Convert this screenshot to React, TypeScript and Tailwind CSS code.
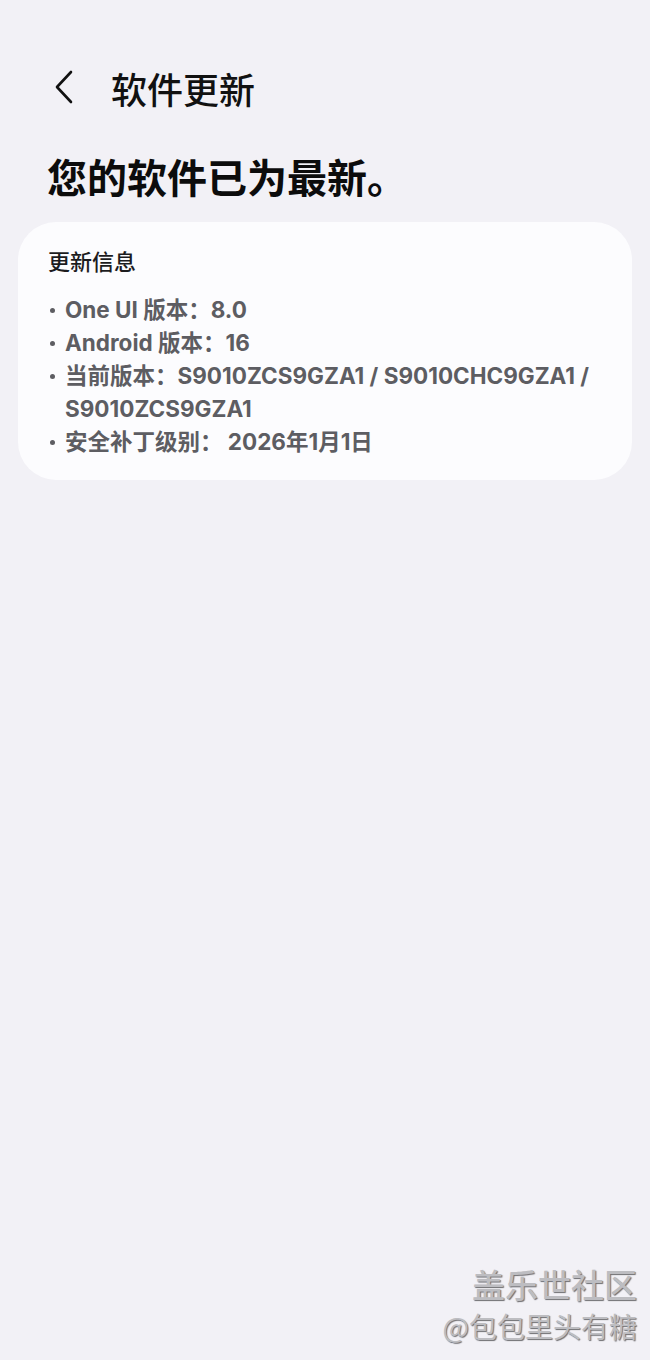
const INFO = [
  'One UI 版本：8.0',
  'Android 版本：16',
  '当前版本：S9010ZCS9GZA1 / S9010CHC9GZA1 / S9010ZCS9GZA1',
  '安全补丁级别： 2026年1月1日',
]

export default function App() {
  return (
    <div className="relative h-[1360px] w-full overflow-hidden bg-[#f2f1f6] font-['Noto_Sans_CJK_SC',sans-serif]">
      <div className="flex h-[106px] items-end gap-[35px] pl-[52px]">
        <svg width="24" height="36" viewBox="0 0 24 36" className="mb-[1px]">
          <path d="M19 3 L5 18 L19 33" fill="none" stroke="#111" strokeWidth="2.6" strokeLinecap="round" strokeLinejoin="round" />
        </svg>
        <p className="text-[36px] font-medium leading-none text-[#111]">软件更新</p>
      </div>
      <h1 className="mt-[50px] pl-[47px] text-[40px] font-bold leading-none text-[#0c0c0c]">您的软件已为最新。</h1>
      <div className="mx-[18px] mt-[26px] rounded-[38px] bg-[#fcfcfe] px-[30px] pt-[27px] pb-[22px]">
        <p className="text-[22px] font-medium leading-none text-[#1c1c1e]">更新信息</p>
        <ul className="mt-[22px] flex flex-col font-['Inter','Noto_Sans_CJK_SC',sans-serif]">
          {INFO.map((t) => (
            <li key={t} className="flex items-start text-[22.5px] font-bold leading-[33px] text-[#5d5d62]">
              <span className="mt-[15px] mr-[10px] ml-[2px] size-[5px] shrink-0 rounded-full bg-[#5d5d62]" />
              <span className="pr-[4px]">{t}</span>
            </li>
          ))}
        </ul>
      </div>
      <div className="absolute right-[13px] bottom-[14px] flex flex-col items-end text-[#bdbdc1] [text-shadow:1px_1px_1px_#6e6e72]">
        <p className="text-[33px] font-medium leading-[44px]">盖乐世社区</p>
        <p className="text-[28px] leading-[40px]">@包包里头有糖</p>
      </div>
    </div>
  )
}
